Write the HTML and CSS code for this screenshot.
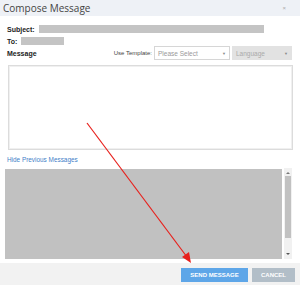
FILE: index.html
```html
<!DOCTYPE html>
<html>
<head>
<meta charset="utf-8">
<link rel="stylesheet" href="styles.css">
</head>
<body>
<div class="dialog">
  <div class="header">
    <span class="title">Compose Message</span>
    <span class="close">×</span>
  </div>
  <div class="content">
    <div class="row subject-row">
      <span class="label">Subject:</span>
      <span class="bar subject-bar"></span>
    </div>
    <div class="row to-row">
      <span class="label">To:</span>
      <span class="bar to-bar"></span>
    </div>
    <div class="row message-row">
      <span class="label">Message</span>
      <div class="template">
        <span class="tpl-label">Use Template:</span>
        <div class="select">
          <span>Please Select</span>
          <span class="caret">▼</span>
        </div>
        <div class="select lang">
          <span>Language</span>
          <span class="caret">▼</span>
        </div>
      </div>
    </div>
    <div class="textarea"></div>
    <a class="link">Hide Previous Messages</a>
    <div class="previous">
      <div class="prev-box"></div>
      <div class="scrollbar">
        <span class="arrow up"></span>
        <span class="thumb"></span>
        <span class="arrow down"></span>
      </div>
    </div>
  </div>
  <div class="footer">
    <button class="btn send">SEND MESSAGE</button>
    <button class="btn cancel">CANCEL</button>
  </div>
  <svg class="annotation" width="300" height="285" viewBox="0 0 300 285">
    <line x1="87" y1="123" x2="187" y2="257" stroke="#e8201c" stroke-width="1.2"/>
    <polygon points="191,263 182,257 189,252" fill="#e8201c"/>
  </svg>
</div>
</body>
</html>
```

FILE: styles.css
```css
* { box-sizing: border-box; }
html, body { margin: 0; padding: 0; }
body {
  width: 300px;
  height: 285px;
  background: #ffffff;
  font-family: "Liberation Sans", Arial, sans-serif;
  color: #333;
  overflow: hidden;
}
.dialog {
  position: relative;
  width: 300px;
  height: 285px;
  display: flex;
  flex-direction: column;
}
.header {
  height: 16px;
  background: #eef1f6;
  display: flex;
  align-items: center;
  justify-content: space-between;
  padding: 0 14px 0 3px;
}
.title {
  font-family: "Open Sans", sans-serif;
  font-size: 10px;
  color: #444;
  line-height: 16px;
}
.close {
  font-size: 6px;
  color: #aaa;
}
.content {
  padding: 0 7px;
  display: flex;
  flex-direction: column;
}
.row {
  display: flex;
  align-items: center;
}
.label {
  font-size: 7px;
  font-weight: bold;
  color: #222;
}
.bar {
  display: block;
  height: 8px;
  background: #c4c4c4;
}
.subject-row { margin-top: 9px; height: 8px; }
.subject-bar { width: 225px; margin-left: 4px; }
.to-row { margin-top: 4px; height: 8px; }
.to-bar { width: 43px; margin-left: 4px; }
.message-row {
  margin-top: 1px;
  height: 14px;
  justify-content: space-between;
  padding-right: 1px;
}
.template {
  display: flex;
  align-items: center;
  height: 14px;
}
.tpl-label {
  font-size: 6px;
  color: #444;
  margin-right: 2px;
}
.select {
  width: 76px;
  height: 14px;
  border: 1px solid #d6d6d6;
  background: #fff;
  display: flex;
  align-items: center;
  justify-content: space-between;
  padding: 0 3px;
  font-size: 6.5px;
  color: #999;
}
.select.lang {
  width: 60px;
  margin-left: 2px;
  background: #e2e2e2;
  border-color: #e2e2e2;
  color: #aaa;
}
.caret { font-size: 4px; color: #888; }
.textarea {
  margin-top: 5px;
  margin-left: 1px;
  width: 285px;
  height: 85px;
  border: 1px solid #dcdcdc;
  box-shadow: inset 0 0 0 1px #f0f0f0;
  background: #fff;
}
.link {
  margin-top: 6px;
  font-size: 6.4px;
  color: #3f80c8;
  line-height: 8px;
}
.previous {
  margin-top: 4px;
  margin-left: -2px;
  display: flex;
  height: 91px;
  gap: 2px;
}
.prev-box {
  width: 277px;
  background: #c1c1c1;
  margin-top: 1px;
}
.scrollbar {
  width: 8px;
  background: #f1f1f1;
  display: flex;
  flex-direction: column;
  align-items: center;
  padding: 2px 0;
}
.arrow {
  width: 0;
  height: 0;
  border-left: 2px solid transparent;
  border-right: 2px solid transparent;
}
.arrow.up { border-bottom: 2px solid #777; margin-top: 2px; }
.arrow.down { border-top: 2px solid #555; margin-bottom: 2px; }
.thumb {
  width: 6px;
  height: 62px;
  background: #c1c1c1;
  margin-top: 2px;
  flex: 0 0 auto;
}
.scrollbar .down { margin-top: auto; }
.footer {
  margin-top: auto;
  height: 22px;
  background: #f2f2f2;
  display: flex;
  justify-content: flex-end;
  align-items: flex-start;
  padding: 5px 5px 0 0;
  gap: 4px;
}
.btn {
  border: none;
  height: 14px;
  font-family: "Liberation Sans", Arial, sans-serif;
  font-size: 6px;
  font-weight: bold;
  color: #fff;
  padding: 0;
  cursor: pointer;
}
.send { width: 67px; background: #5ea6e8; }
.cancel { width: 43px; background: #b2bec8; }
.annotation {
  position: absolute;
  left: 0;
  top: 0;
  pointer-events: none;
}
```
